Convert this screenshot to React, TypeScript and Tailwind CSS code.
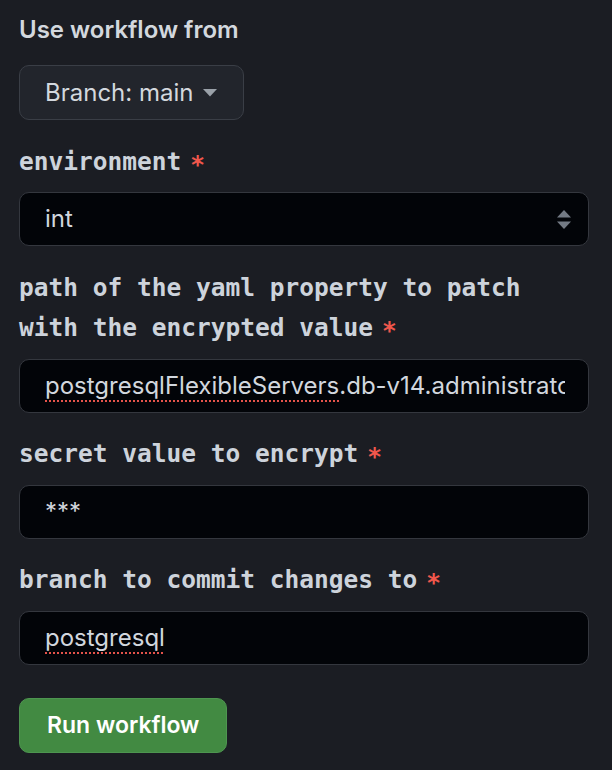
import type { ReactNode } from "react";

const sans = "font-['Inter','Liberation_Sans',sans-serif]";
const mono = "font-['DejaVu_Sans_Mono','Liberation_Mono',monospace]";

function FieldLabel({ children }: { children: ReactNode }) {
  return (
    <div className={`${mono} text-[24.5px] leading-[40px] font-bold text-[#cdd3db]`}>
      {children}
      <span className="ml-[9px] inline-block translate-y-[3px] text-[#f0574c]">*</span>
    </div>
  );
}

function FakeInput({ children }: { children: ReactNode }) {
  return (
    <div
      className={`${sans} mt-[11px] flex h-[54px] items-center rounded-[10px] border border-[#34373e] bg-[#020408] pl-[25px] pr-[23px] text-[24px] text-[#d2d7de]`}
    >
      <div className="min-w-0 flex-1 overflow-hidden whitespace-nowrap">{children}</div>
    </div>
  );
}

function Misspelled({ children }: { children: ReactNode }) {
  return (
    <span className="underline decoration-dotted decoration-[#e5534b] decoration-2 underline-offset-[6px]">
      {children}
    </span>
  );
}

export default function App() {
  return (
    <div className="min-h-[770px] w-[612px] bg-[#1b1d23] pl-[19px] pr-[23px] pt-[12px]">
      <h2 className={`${sans} text-[24px] leading-[36px] font-semibold text-[#d3d8de]`}>
        Use workflow from
      </h2>

      <button
        className={`${sans} mt-[17px] flex h-[55px] items-center gap-[10px] rounded-[10px] border border-[#3a3e46] bg-[#22252c] pl-[25px] pr-[26px] text-[24px] text-[#d3d8de]`}
      >
        Branch: main
        <svg width="14" height="8" viewBox="0 0 14 8" className="mt-[1px]">
          <path d="M0 0h14L7 7.5z" fill="#9aa1a9" />
        </svg>
      </button>

      <div className="mt-[22px]">
        <FieldLabel>environment</FieldLabel>
        <div
          className={`${sans} mt-[10px] flex h-[54px] items-center justify-between rounded-[10px] border border-[#34373e] bg-[#020408] pl-[25px] pr-[17px] text-[24px] text-[#d2d7de]`}
        >
          <span>int</span>
          <svg width="14" height="20" viewBox="0 0 14 20" className="mt-[2px]">
            <path d="M7 0l7 7.5H0z" fill="#737a84" />
            <path d="M0 11.5h14L7 19z" fill="#737a84" />
          </svg>
        </div>
      </div>

      <div className="mt-[22px]">
        <FieldLabel>
          path of the yaml property to patch
          <br />
          with the encrypted value
        </FieldLabel>
        <FakeInput>
          <Misspelled>postgresqlFlexibleServers</Misspelled>.db-v14.administratorLoginPassword
        </FakeInput>
      </div>

      <div className="mt-[21px]">
        <FieldLabel>secret value to encrypt</FieldLabel>
        <FakeInput>***</FakeInput>
      </div>

      <div className="mt-[21px]">
        <FieldLabel>branch to commit changes to</FieldLabel>
        <FakeInput>
          <Misspelled>postgresql</Misspelled>
        </FakeInput>
      </div>

      <button
        className={`${sans} mt-[33px] h-[55px] rounded-[10px] border border-[#4e9550] bg-[#428a42] px-[27px] text-[23px] font-semibold text-white`}
      >
        Run workflow
      </button>
    </div>
  );
}
